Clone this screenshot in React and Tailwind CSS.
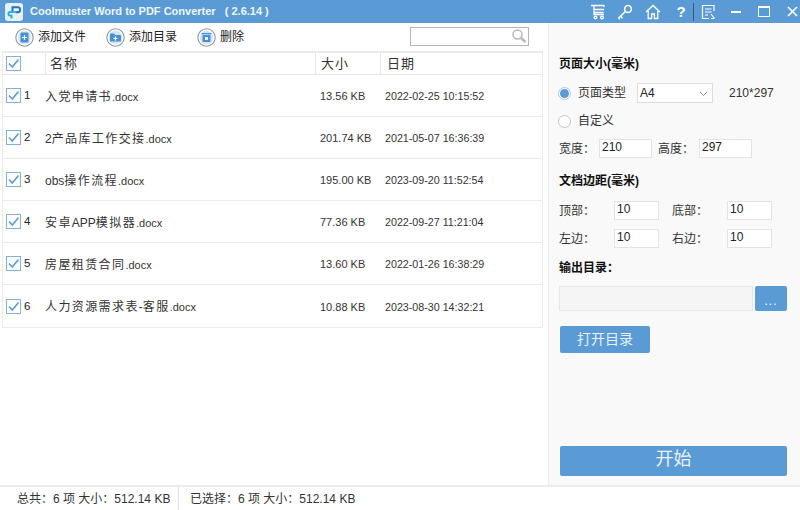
import React from "react";

const FONT = "font-['Liberation_Sans','Noto_Sans_CJK_SC',sans-serif]";

const files = [
  { id: 1, name: "入党申请书", ext: ".docx", size: "13.56 KB", date: "2022-02-25 10:15:52" },
  { id: 2, name: "2产品库工作交接", ext: ".docx", size: "201.74 KB", date: "2021-05-07 16:36:39" },
  { id: 3, name: "obs操作流程", ext: ".docx", size: "195.00 KB", date: "2023-09-20 11:52:54" },
  { id: 4, name: "安卓APP模拟器", ext: ".docx", size: "77.36 KB", date: "2022-09-27 11:21:04" },
  { id: 5, name: "房屋租赁合同", ext: ".docx", size: "13.60 KB", date: "2022-01-26 16:38:29" },
  { id: 6, name: "人力资源需求表-客服", ext: ".docx", size: "10.88 KB", date: "2023-08-30 14:32:21" },
];

// CJK runs sit wider in the list than the latin ones
function FileName({ name, ext }) {
  const runs = name.match(/[\u4e00-\u9fff]+|[^\u4e00-\u9fff]+/g);
  return (
    <>
      {runs.map((run, i) =>
        /[\u4e00-\u9fff]/.test(run) ? (
          <span key={i} className="tracking-[1.4px]">{run}</span>
        ) : (
          <span key={i}>{run}</span>
        )
      )}
      <span className="text-[11px]">{ext}</span>
    </>
  );
}

function Check() {
  return (
    <span className="flex h-[15px] w-[15px] shrink-0 items-center justify-center border border-[#7fb2e2] bg-white">
      <svg width="13" height="13" viewBox="0 0 13 13" fill="none" stroke="#5b9bd5" strokeWidth="1.6">
        <path d="M2 6.5 L5.3 10 L11.5 2.5" />
      </svg>
    </span>
  );
}

function ToolIcon({ children }) {
  return (
    <svg width="19" height="19" viewBox="0 0 19 19" className="shrink-0">
      <circle cx="9.5" cy="9.5" r="8.7" fill="#fff" stroke="#8d959d" strokeWidth="1.1" />
      <circle cx="9.5" cy="9.5" r="6.8" fill="#d4e5f6" />
      {children}
    </svg>
  );
}

function ToolButton({ label, icon, className }) {
  return (
    <div className={`flex items-center gap-[4px] ${className}`}>
      <ToolIcon>{icon}</ToolIcon>
      <span className="text-[12px] text-[#222]">{label}</span>
    </div>
  );
}

function Field({ value, className }) {
  return (
    <div className={`h-[19px] border border-[#e3e3e3] bg-white pl-[2px] text-[12px] leading-[15px] text-[#222] ${className}`}>
      {value}
    </div>
  );
}

function Heading({ children, className }) {
  return <div className={`text-[12px] leading-[16px] font-bold text-[#111] ${className}`}>{children}</div>;
}

function MarginRow({ a, b, className }) {
  return (
    <div className={`flex items-center text-[12px] text-[#333] ${className}`}>
      <span className="w-[55px]">{a}：</span>
      <Field value="10" className="w-[45px]" />
      <span className="ml-[13px] w-[55px]">{b}：</span>
      <Field value="10" className="w-[45px]" />
    </div>
  );
}

function WindowIcons() {
  return (
    <div className="ml-auto flex items-center text-white">
      <svg width="18" height="16" viewBox="0 0 18 16" fill="none" stroke="#fff" strokeWidth="1.3">
        <path d="M2 1.5h13.5M15.5 1.5l-1 1.5M5 5.5h10M14.5 8.5H5M5 1.5v9h10" />
        <circle cx="6.5" cy="13.5" r="1.3" />
        <circle cx="13" cy="13.5" r="1.3" />
      </svg>
      <svg width="18" height="16" viewBox="0 0 18 16" fill="none" stroke="#fff" strokeWidth="1.5" className="ml-[9px]">
        <circle cx="12" cy="5" r="3.4" />
        <path d="M9.5 7.5L2.5 14M4.5 12l2 2.2M2.5 14l1.3 1.3" />
      </svg>
      <svg width="16" height="16" viewBox="0 0 16 16" fill="none" stroke="#fff" strokeWidth="1.3" className="ml-[11px]">
        <path d="M1 8L8 1.5 15 8M3.2 7v7.5h3.4V10h2.8v4.5h3.4V7" />
      </svg>
      <span className="ml-[15px] w-[10px] text-center text-[15px] leading-none font-bold">?</span>
      <span className="ml-[7px] h-[18px] w-[1px] bg-[#40566e]" />
      <svg width="15" height="16" viewBox="0 0 15 16" fill="none" stroke="#fff" strokeWidth="1.2" className="ml-[7px]">
        <path d="M13 7V1.5H1.5v13H8M4 5h6.5M4 8h6.5M4 11h3M10 10l3.5 4.5M10 14.5h3.5" />
      </svg>
      <span className="ml-[15px] h-[2px] w-[10px] bg-white" />
      <span className="ml-[17px] h-[11px] w-[12px] border border-t-2 border-white" />
      <svg width="11" height="11" viewBox="0 0 11 11" stroke="#fff" strokeWidth="1.6" className="mr-[2px] ml-[17px]">
        <path d="M1 1L10 10M10 1L1 10" />
      </svg>
    </div>
  );
}

export default function App() {
  return (
    <div className={`flex h-[510px] w-[800px] flex-col overflow-hidden bg-white ${FONT}`}>
      {/* title bar */}
      <div className="flex h-[23px] shrink-0 items-center bg-[#5b9bd5] pl-[5px]">
        <span className="flex h-[18px] w-[18px] items-center justify-center rounded-[3px] bg-[#e6f0fa]">
          <svg width="14" height="14" viewBox="0 0 14 14" fill="none">
            <path d="M5.5 7V2.2h5.5a2 2 0 0 1 2 2v1a2 2 0 0 1-2 2H8.5" stroke="#2474c4" strokeWidth="2" />
            <path d="M8.5 7H3a1.5 1.5 0 0 0-1.5 1.5v.5A1.5 1.5 0 0 0 3 10.5h1.5v3" stroke="#25b3dc" strokeWidth="2" />
          </svg>
        </span>
        <span className="ml-[7px] text-[11px] font-bold whitespace-pre text-[#eef5fc]">
          Coolmuster Word to PDF Converter   ( 2.6.14 )
        </span>
        <WindowIcons />
      </div>

      <div className="flex min-h-0 flex-1">
        {/* file list */}
        <div className="flex w-[548px] shrink-0 flex-col">
          <div className="flex h-[28px] shrink-0 items-center pl-[15px]">
            <ToolButton
              label="添加文件"
              icon={
                <>
                  <rect x="5.5" y="4.5" width="8" height="10" rx="1" fill="#4a90d9" />
                  <path d="M9.5 7v5M7 9.5h5" stroke="#fff" strokeWidth="1.2" />
                </>
              }
            />
            <ToolButton
              label="添加目录"
              className="ml-[20px]"
              icon={
                <>
                  <path d="M4 5.5h4l1 1.5h6v6.5H4z" fill="#4a90d9" />
                  <path d="M9.5 8.5v4M7.5 10.5h4" stroke="#fff" strokeWidth="1.2" />
                </>
              }
            />
            <ToolButton
              label="删除"
              className="ml-[20px]"
              icon={
                <>
                  <path d="M4.5 5h10v1.3h-10z" fill="#4a90d9" />
                  <path d="M5.5 7h8v7h-8z" fill="#4a90d9" />
                  <path d="M8 9.2h3v2.6H8z" fill="#fff" />
                </>
              }
            />
            <div className="mt-[-2px] mr-[19px] ml-auto flex h-[19px] w-[119px] items-center justify-end border border-[#b5b5b5] bg-white pr-[1px]">
              <svg width="16" height="16" viewBox="0 0 16 16" fill="none" stroke="#b9b9b9">
                <circle cx="6.5" cy="6.5" r="4.5" strokeWidth="1.5" />
                <path d="M10 10l4.5 4" strokeWidth="2.5" />
              </svg>
            </div>
          </div>

          <div className="ml-[2px] w-[541px] border-x border-b border-t-2 border-[#ebebeb]">
            <div className="flex h-[22px] items-center border-b border-[#e6e6e6] text-[13px] text-[#333]">
              <div className="flex h-full w-[43px] items-center border-r border-[#e6e6e6] pl-[3px]">
                <Check />
              </div>
              <div className="flex h-full w-[270px] items-center border-r border-[#e6e6e6] pl-[4px] tracking-[1px]">名称</div>
              <div className="flex h-full w-[65px] items-center border-r border-[#e6e6e6] pl-[5px] tracking-[1px]">大小</div>
              <div className="pl-[6px] tracking-[1px]">日期</div>
            </div>
            {files.map((f) => (
              <div
                key={f.id}
                className="flex h-[42px] items-center border-b border-[#ebebeb] text-[12px] text-[#333] last:border-b-0"
              >
                <div className="flex w-[42px] shrink-0 items-center gap-[3px] pl-[3px]">
                  <Check />
                  <span className="pt-[1px] text-[11.5px] text-[#222]">{f.id}</span>
                </div>
                <div className="w-[271px] shrink-0 pt-[2px]">
                  <FileName name={f.name} ext={f.ext} />
                </div>
                <div className="w-[65px] shrink-0 pt-[2px] pl-[4px] text-[11px]">{f.size}</div>
                <div className="pt-[2px] pl-[4px] text-[10.7px]">{f.date}</div>
              </div>
            ))}
          </div>
        </div>

        {/* settings panel */}
        <div className="flex flex-1 flex-col border-l border-[#ececec] bg-[#f9f9f9] pr-[13px] pb-[9px] pl-[10px]">
          <Heading className="mt-[33px]">页面大小(毫米)</Heading>
          <div className="mt-[11px] flex h-[20px] items-center text-[12px] text-[#333]">
            <span className="ml-[-1px] flex h-[13px] w-[13px] items-center justify-center rounded-full border border-[#a9c9e8] bg-white">
              <span className="h-[9px] w-[9px] rounded-full bg-[#5b9bd5]" />
            </span>
            <span className="ml-[7px]">页面类型</span>
            <div className="ml-[11px] flex h-[20px] w-[76px] items-center justify-between border border-[#ddd] bg-white pr-[3px] pl-[2px] text-[#222]">
              A4
              <svg width="11" height="11" viewBox="0 0 11 11" fill="none" stroke="#888">
                <path d="M2 4l3.5 3.5L9 4" />
              </svg>
            </div>
            <span className="ml-[16px] text-[#333]">210*297</span>
          </div>
          <div className="mt-[8px] flex h-[20px] items-center text-[12px] text-[#333]">
            <span className="ml-[-1px] h-[13px] w-[13px] rounded-full border border-[#c4c4c4] bg-white" />
            <span className="ml-[7px]">自定义</span>
          </div>
          <div className="mt-[8px] flex items-center text-[12px] text-[#333]">
            <span className="w-[40px]">宽度：</span>
            <Field value="210" className="w-[53px]" />
            <span className="ml-[6px] w-[41px]">高度：</span>
            <Field value="297" className="w-[53px]" />
          </div>

          <Heading className="mt-[15px]">文档边距(毫米)</Heading>
          <MarginRow a="顶部" b="底部" className="mt-[12px]" />
          <MarginRow a="左边" b="右边" className="mt-[9px]" />
          <Heading className="mt-[12px]">输出目录：</Heading>

          <div className="mt-[10px] flex h-[25px] items-stretch">
            <div className="w-[194px] border border-[#e6e6e6] bg-[#f5f5f5]" />
            <div className="ml-[2px] flex w-[32px] items-end justify-center rounded-[2px] bg-[#5b9bd5] pb-[4px] text-[12px] leading-none tracking-[1px] text-white">
              ...
            </div>
          </div>
          <div className="mt-[15px] ml-[1px] flex h-[27px] w-[90px] items-center justify-center rounded-[2px] bg-[#5b9bd5] text-[14px] text-[#e8f1fa]">
            打开目录
          </div>
          <div className="mt-auto ml-[1px] flex h-[30px] items-center justify-center rounded-[2px] bg-[#5b9bd5] pb-[3px] text-[18px] text-[#e8f1fa]">
            开始
          </div>
        </div>
      </div>

      {/* status bar */}
      <div className="flex h-[25px] shrink-0 items-center border-t-2 border-[#ececec] text-[12px] text-[#333]">
        <div className="flex h-full w-[179px] items-center border-r border-[#e2e2e2] pl-[17px]">
          总共：6 项 大小：512.14 KB
        </div>
        <div className="pl-[11px]">已选择：6 项 大小：512.14 KB</div>
      </div>
    </div>
  );
}
